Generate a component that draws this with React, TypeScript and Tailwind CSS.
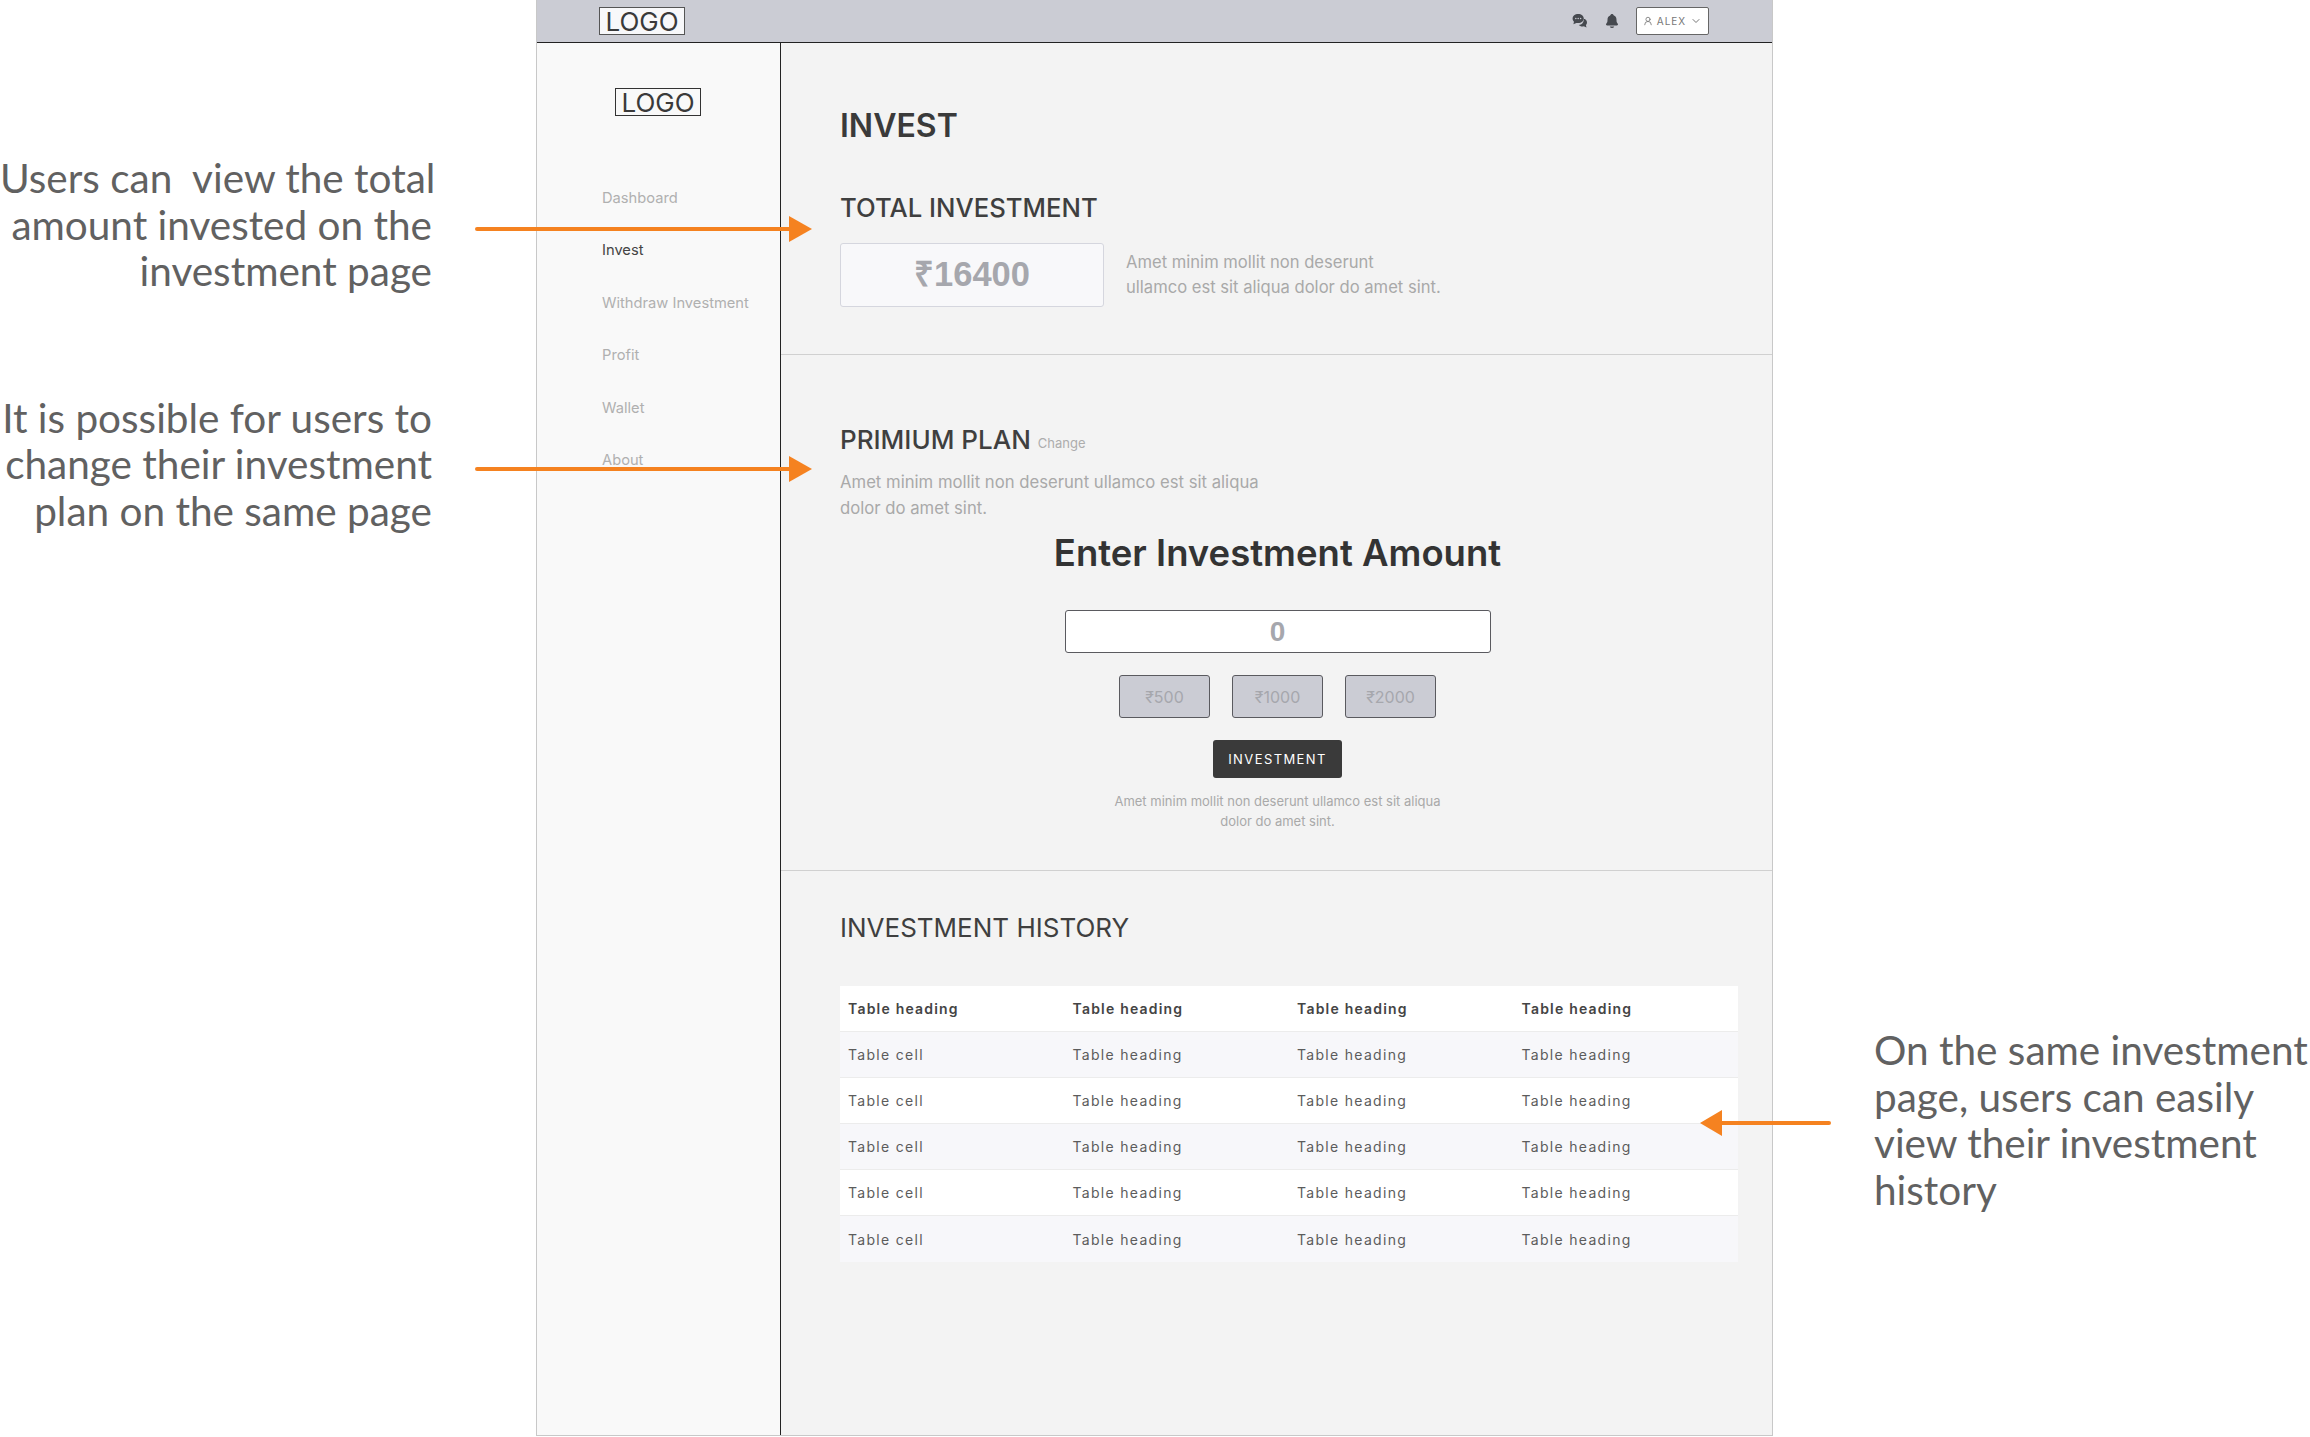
import React from 'react';
import { IoNotifications } from 'react-icons/io5';
import { ChevronDown, UserRound } from 'lucide-react';

const navItems = ['Dashboard', 'Invest', 'Withdraw Investment', 'Profit', 'Wallet', 'About'];
const rows = [0, 1, 2, 3, 4];

const Logo = ({ className }: { className: string }) => (
  <div
    className={`flex h-[28px] w-[86px] items-center justify-center border pt-[1px] text-[26px] leading-none text-[#3a3a3a] ${className}`}
  >
    LOGO
  </div>
);

const Arrow = ({ className }: { className: string }) => (
  <svg className={`absolute ${className}`} width="337" height="26" viewBox="0 0 337 26">
    <line x1="2" y1="13" x2="316" y2="13" stroke="#f58220" strokeWidth="4" strokeLinecap="round" />
    <polygon points="314,0 337,13 314,26" fill="#f58220" />
  </svg>
);

const ArrowLeft = () => (
  <svg className="absolute left-[1700px] top-[1110px]" width="131" height="26" viewBox="0 0 131 26">
    <line x1="20" y1="13" x2="129" y2="13" stroke="#f58220" strokeWidth="4" strokeLinecap="round" />
    <polygon points="22,0 0,13 22,26" fill="#f58220" />
  </svg>
);

const ChatIcon = () => (
  <svg width="16" height="16" viewBox="0 0 16 16" fill="#46494f">
    <path d="M11.6 5.6c1.9.5 3.4 2 3.4 3.9 0 1-.4 1.9-1.1 2.6l.6 2.4-2.7-1.2c-.5.1-1 .2-1.5.2-1.4 0-2.7-.6-3.5-1.5 3 0 5.2-2.3 5-6.4z" />
    <path d="M6.2 1C3 1 .6 3 .6 5.6c0 1.2.5 2.3 1.4 3.1l-.6 2.6 3-1.4c.5.1 1.2.2 1.8.2 3.2 0 5.6-2 5.6-4.5S9.4 1 6.2 1z" />
    <circle cx="3.8" cy="5.6" r=".75" fill="#cbccd4" />
    <circle cx="6.2" cy="5.6" r=".75" fill="#cbccd4" />
    <circle cx="8.6" cy="5.6" r=".75" fill="#cbccd4" />
  </svg>
);

const AmountButton = ({ label }: { label: string }) => (
  <div className="flex h-[43px] w-[91px] items-center justify-center rounded-[3px] border border-[#5a5a5f] bg-[#cbccd4] text-[16px] text-[#a6a7ad]">
    {label}
  </div>
);

const Row = ({ first, striped, last }: { first: string; striped: boolean; last: boolean }) => (
  <div
    className={`grid h-[46px] grid-cols-[repeat(4,224.5px)] items-center pl-[8px] text-[14px] tracking-[1.3px] text-[#5c5c5c] ${
      striped ? 'bg-[#f7f7fa]' : 'bg-white'
    } ${last ? '' : 'border-b border-[#ececec]'}`}
  >
    <span>{first}</span>
    <span>Table heading</span>
    <span>Table heading</span>
    <span>Table heading</span>
  </div>
);

export default function App() {
  return (
    <div className="relative flex h-[1437px] w-[2310px] overflow-hidden bg-white font-['Inter',sans-serif]">
      <aside className="w-[536px] shrink-0 pr-[104px] pt-[155px] text-right font-['Lato',sans-serif] text-[40.5px] leading-[46.5px] whitespace-pre text-[#616161]">
        <p>{'Users can  view the total\namount invested on the\ninvestment page'}</p>
        <p className="mt-[100px]">{'It is possible for users to\nchange their investment\nplan on the same page'}</p>
      </aside>

      <div className="flex h-[1436px] w-[1237px] shrink-0 flex-col border-x border-b border-[#c8c8c8]">
        <header className="flex h-[43px] shrink-0 items-center justify-between border-b border-[#222] bg-[#cbccd4] pl-[62px] pr-[63px]">
          <Logo className="border-[#555] bg-[#f8f8fa]" />
          <div className="flex items-center">
            <ChatIcon />
            <IoNotifications className="ml-[16px] text-[#46494f]" size={16} />
            <div className="ml-[16px] flex h-[28px] w-[73px] items-center justify-center gap-[4px] rounded-[2px] border border-[#666] bg-white text-[10px] tracking-[1px] text-[#777]">
              <UserRound size={10} />
              <span>ALEX</span>
              <ChevronDown size={12} />
            </div>
          </div>
        </header>

        <div className="flex min-h-0 flex-1">
          <nav className="w-[244px] shrink-0 border-r border-[#222] bg-[#f9f9f9]">
            <div className="flex justify-center pr-[1px] pt-[45px]">
              <Logo className="border-[#333] bg-[#f9f9f9]" />
            </div>
            <ul className="flex flex-col gap-[32.4px] pl-[65px] pt-[72px] text-[14.7px] leading-[20px] text-[#b0b0b0]">
              {navItems.map((item) => (
                <li key={item} className={item === 'Invest' ? 'text-[#444]' : ''}>
                  {item}
                </li>
              ))}
            </ul>
          </nav>

          <main className="flex min-w-0 flex-1 flex-col bg-[#f3f3f3]">
            <section className="h-[312px] shrink-0 border-b border-[#d0d0d0] pl-[59px] pt-[63px]">
              <h1 className="text-[32px] font-semibold leading-[40px] text-[#3a3a3a]">INVEST</h1>
              <h2 className="mt-[46px] text-[25.7px] font-medium leading-[32px] text-[#3f3f3f]">TOTAL INVESTMENT</h2>
              <div className="mt-[19px] flex items-center">
                <div className="flex h-[64px] w-[264px] items-center justify-center rounded-[3px] border border-[#d5d6de] bg-[#f8f8fa] pb-[1px] font-['Liberation_Sans',sans-serif] text-[34.5px] font-bold text-[#a6a7ad]">
                  ₹16400
                </div>
                <p className="ml-[22px] text-[16.6px] leading-[25px] text-[#a9a9a9]">
                  Amet minim mollit non deserunt
                  <br />
                  ullamco est sit aliqua dolor do amet sint.
                </p>
              </div>
            </section>

            <section className="h-[516px] shrink-0 border-b border-[#d0d0d0] pl-[59px] pt-[69px]">
              <div className="flex items-baseline gap-[7px]">
                <h2 className="text-[26px] font-medium leading-[32px] text-[#3f3f3f]">PRIMIUM PLAN</h2>
                <span className="relative top-[-1px] text-[13px] text-[#adadad]">Change</span>
              </div>
              <p className="mt-[13px] text-[16.7px] leading-[26px] text-[#a9a9a9]">
                Amet minim mollit non deserunt ullamco est sit aliqua
                <br />
                dolor do amet sint.
              </p>
              <div className="ml-[224.5px] flex w-[426px] flex-col items-center">
                <h3 className="mt-[10px] whitespace-nowrap text-[36.5px] font-semibold leading-[44px] text-[#333]">
                  Enter Investment Amount
                </h3>
                <div className="mt-[35px] flex h-[43px] w-[426px] items-center justify-center rounded-[3px] border border-[#5a5a5f] bg-white font-['Liberation_Sans',sans-serif] text-[28px] font-bold text-[#a6a7ad]">
                  0
                </div>
                <div className="mt-[22px] flex gap-[22px]">
                  <AmountButton label="₹500" />
                  <AmountButton label="₹1000" />
                  <AmountButton label="₹2000" />
                </div>
                <button className="mt-[22px] flex h-[38px] w-[129px] items-center justify-center rounded-[3px] bg-[#3a3a3a] pt-[2px] text-[13px] tracking-[1.4px] text-white">
                  INVESTMENT
                </button>
                <p className="mt-[13px] text-center text-[13px] leading-[20px] text-[#a9a9a9]">
                  Amet minim mollit non deserunt ullamco est sit aliqua
                  <br />
                  dolor do amet sint.
                </p>
              </div>
            </section>

            <section className="flex-1 pl-[59px] pr-[34px] pt-[41px]">
              <h2 className="text-[26px] leading-[32px] text-[#3f3f3f]">INVESTMENT HISTORY</h2>
              <div className="mt-[42px]">
                <div className="grid h-[46px] grid-cols-[repeat(4,224.5px)] items-center border-b border-[#ececec] bg-white pl-[8px] text-[14px] font-semibold tracking-[1.2px] text-[#444]">
                  <span>Table heading</span>
                  <span>Table heading</span>
                  <span>Table heading</span>
                  <span>Table heading</span>
                </div>
                {rows.map((i) => (
                  <Row key={i} first="Table cell" striped={i % 2 === 0} last={i === 4} />
                ))}
              </div>
            </section>
          </main>
        </div>
      </div>

      <aside className="min-w-0 flex-1 pl-[101px] pt-[1027px] font-['Lato',sans-serif] text-[40.5px] leading-[46.5px] whitespace-pre text-[#616161]">
        {'On the same investment\npage, users can easily\nview their investment\nhistory'}
      </aside>

      <Arrow className="left-[475px] top-[216px]" />
      <Arrow className="left-[475px] top-[456px]" />
      <ArrowLeft />
    </div>
  );
}
